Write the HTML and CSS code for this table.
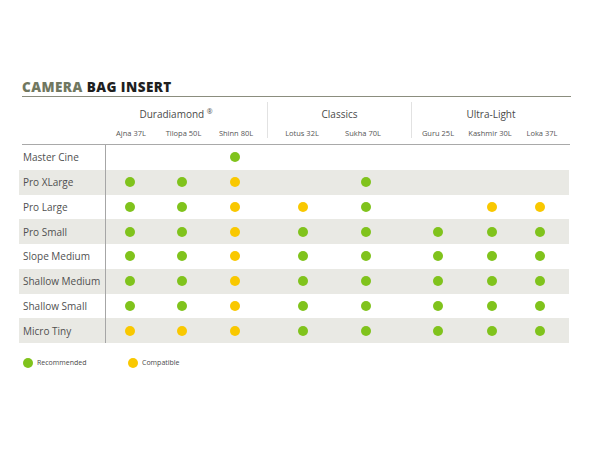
FILE: index.html
```html
<!DOCTYPE html>
<html>
<head>
<meta charset="utf-8">
<link rel="stylesheet" href="styles.css">
</head>
<body>
<div class="page">
  <h1 class="title"><span class="accent">CAMERA</span> BAG INSERT</h1>
  <div class="head">
    <div class="head-spacer"></div>
    <div class="group g1">
      <div class="group-name">Duradiamond <sup>®</sup></div>
      <div class="subs"><span class="sub">Ajna 37L</span><span class="sub">Tilopa 50L</span><span class="sub">Shinn 80L</span></div>
    </div>
    <div class="group g2">
      <div class="group-name">Classics</div>
      <div class="subs"><span class="sub">Lotus 32L</span><span class="sub">Sukha 70L</span></div>
    </div>
    <div class="group g3">
      <div class="group-name">Ultra-Light</div>
      <div class="subs"><span class="sub">Guru 25L</span><span class="sub">Kashmir 30L</span><span class="sub">Loka 37L</span></div>
    </div>
  </div>
  <div class="rows">
    <div class="row"><div class="label">Master Cine</div><div class="cell"></div><div class="cell"></div><div class="cell"><i class="dot g"></i></div><div class="cell"></div><div class="cell"></div><div class="cell"></div><div class="cell"></div><div class="cell"></div></div>
    <div class="row alt"><div class="label">Pro XLarge</div><div class="cell"><i class="dot g"></i></div><div class="cell"><i class="dot g"></i></div><div class="cell"><i class="dot y"></i></div><div class="cell"></div><div class="cell"><i class="dot g"></i></div><div class="cell"></div><div class="cell"></div><div class="cell"></div></div>
    <div class="row"><div class="label">Pro Large</div><div class="cell"><i class="dot g"></i></div><div class="cell"><i class="dot g"></i></div><div class="cell"><i class="dot y"></i></div><div class="cell"><i class="dot y"></i></div><div class="cell"><i class="dot g"></i></div><div class="cell"></div><div class="cell"><i class="dot y"></i></div><div class="cell"><i class="dot y"></i></div></div>
    <div class="row alt"><div class="label">Pro Small</div><div class="cell"><i class="dot g"></i></div><div class="cell"><i class="dot g"></i></div><div class="cell"><i class="dot y"></i></div><div class="cell"><i class="dot g"></i></div><div class="cell"><i class="dot g"></i></div><div class="cell"><i class="dot g"></i></div><div class="cell"><i class="dot g"></i></div><div class="cell"><i class="dot g"></i></div></div>
    <div class="row"><div class="label">Slope Medium</div><div class="cell"><i class="dot g"></i></div><div class="cell"><i class="dot g"></i></div><div class="cell"><i class="dot y"></i></div><div class="cell"><i class="dot g"></i></div><div class="cell"><i class="dot g"></i></div><div class="cell"><i class="dot g"></i></div><div class="cell"><i class="dot g"></i></div><div class="cell"><i class="dot g"></i></div></div>
    <div class="row alt"><div class="label">Shallow Medium</div><div class="cell"><i class="dot g"></i></div><div class="cell"><i class="dot g"></i></div><div class="cell"><i class="dot y"></i></div><div class="cell"><i class="dot g"></i></div><div class="cell"><i class="dot g"></i></div><div class="cell"><i class="dot g"></i></div><div class="cell"><i class="dot g"></i></div><div class="cell"><i class="dot g"></i></div></div>
    <div class="row"><div class="label">Shallow Small</div><div class="cell"><i class="dot g"></i></div><div class="cell"><i class="dot g"></i></div><div class="cell"><i class="dot y"></i></div><div class="cell"><i class="dot g"></i></div><div class="cell"><i class="dot g"></i></div><div class="cell"><i class="dot g"></i></div><div class="cell"><i class="dot g"></i></div><div class="cell"><i class="dot g"></i></div></div>
    <div class="row alt"><div class="label">Micro Tiny</div><div class="cell"><i class="dot y"></i></div><div class="cell"><i class="dot y"></i></div><div class="cell"><i class="dot y"></i></div><div class="cell"><i class="dot g"></i></div><div class="cell"><i class="dot g"></i></div><div class="cell"><i class="dot g"></i></div><div class="cell"><i class="dot g"></i></div><div class="cell"><i class="dot g"></i></div></div>
  </div>
  <div class="legend">
    <div class="legend-item first"><i class="dot g"></i><span>Recommended</span></div>
    <div class="legend-item"><i class="dot y"></i><span>Compatible</span></div>
  </div>
</div>
</body>
</html>
```
FILE: styles.css
```css
* { box-sizing: border-box; }
html, body { margin: 0; padding: 0; background: #fff; }
body { font-family: "Open Sans", "Liberation Sans", sans-serif; color: #4a4a4a; }

.page { width: 610px; height: 450px; padding-left: 19px; padding-top: 79px; }

.title {
  margin: 0 0 0 3px;
  width: 549px;
  font-size: 13.5px;
  line-height: 16px;
  font-weight: 800;
  color: #1f1f1f;
  padding-bottom: 1px;
  border-bottom: 1px solid #8b8d7e;
  letter-spacing: 0.45px;
}
.title .accent { color: #707760; }

.head {
  display: flex;
  margin-left: 3px;
  width: 548px;
  padding: 5px 0 6px;
  border-bottom: 1px solid #a9a9a9;
}
.head-spacer { width: 83px; }
.group { height: 36px; }
.g1 { width: 163px; border-right: 1px solid #e2e2e2; }
.g2 { width: 144px; border-right: 1px solid #e2e2e2; }
.g3 { width: 158px; }
.group-name {
  margin-top: 5px;
  font-size: 10px;
  line-height: 14px;
  text-align: center;
  color: #4a4a4a;
}
.g1 .group-name { padding-right: 20px; }
.group-name sup { font-size: 7px; vertical-align: 4px; line-height: 0; }
.subs { display: flex; margin-top: 7px; }
.sub {
  width: 48px;
  flex-shrink: 0;
  display: flex;
  justify-content: center;
  white-space: nowrap;
  font-size: 7.5px;
  line-height: 10px;
  color: #555;
}
.g1 .subs { padding-left: 2px; gap: 4.5px; }
.g2 .subs { padding-left: 10px; gap: 13px; }
.g3 .subs { padding-left: 2px; gap: 4px; }

.rows { width: 550px; }
.row {
  display: grid;
  grid-template-columns: 86.5px 52.5px 53px 68px 63px 72px 54px 48px 53px;
  height: 24.75px;
  align-items: center;
}
.row.alt { background: #e9e9e4; }
.label {
  height: 100%;
  display: flex;
  align-items: center;
  padding-left: 4px;
  font-size: 10px;
  color: #505050;
  border-right: 1px solid #a6a6a6;
}
.cell { width: 48px; display: flex; justify-content: center; align-items: center; }

.dot { display: block; width: 10px; height: 10px; border-radius: 50%; flex-shrink: 0; }
.dot.g { background: #80c31c; }
.dot.y { background: #f9c800; }

.legend { display: flex; margin-top: 14px; padding-left: 4px; align-items: center; }
.legend-item { display: flex; align-items: center; gap: 4px; font-size: 7px; line-height: 12px; color: #4a4a4a; }
.legend-item.first { width: 105px; }
```
